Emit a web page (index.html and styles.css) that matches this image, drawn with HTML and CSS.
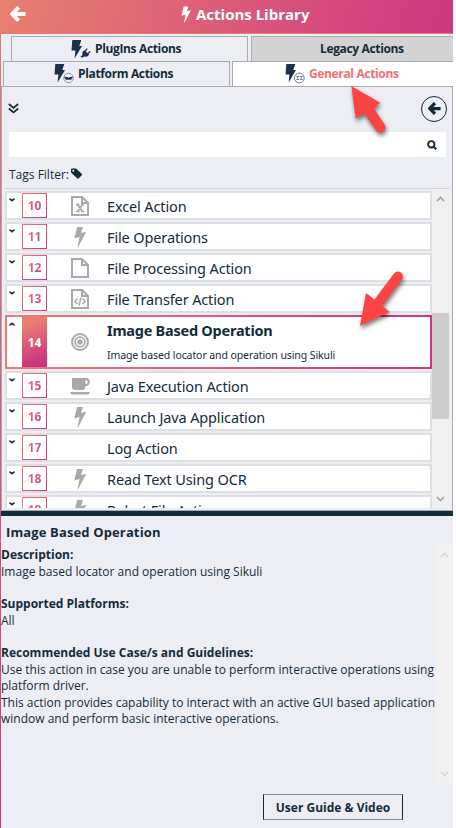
FILE: index.html
```html
<!DOCTYPE html>
<html lang="en">
<head>
<meta charset="utf-8">
<title>Actions Library</title>
<link rel="stylesheet" href="styles.css">
</head>
<body>
<svg class="defs" width="0" height="0" aria-hidden="true">
  <symbol id="bolt" viewBox="0 0 12 19"><path d="M3.200 0h5.600L7 5.600l5-1.100L4.300 19H3.600L5.600 9.600.6 10.900z"/></symbol>
  <symbol id="tabbolt" viewBox="0 0 12 19"><path d="M1.300 0h9L8.300 6h2.700L3.600 18.600l.8-8.100H.5z"/></symbol>
  <symbol id="left" viewBox="0 0 16 16"><path d="M8.600 1.300 2.300 8l6.300 6.700M2.800 8H15.500" fill="none" stroke="currentColor" stroke-width="4"/></symbol>
  <symbol id="page" viewBox="0 0 18 20"><path d="M1 1h10l6 6v12H1zM11 1v6h6" fill="none" stroke="currentColor" stroke-width="2"/></symbol>
  <symbol id="caret" viewBox="0 0 6 4"><path d="M.4.7 3 2.700 5.600.7" fill="none" stroke="currentColor" stroke-width="1.500"/></symbol>
  <symbol id="chev" viewBox="0 0 9 6"><path d="M1 1l3.500 3.500L8 1" fill="none" stroke="currentColor" stroke-width="1.600"/></symbol>
</svg>
<div class="app">
  <header class="header">
    <svg class="back" width="16" height="16"><use href="#left"/></svg>
    <h1 class="title"><svg width="10" height="17"><use href="#bolt"/></svg><span>Actions Library</span></h1>
  </header>
  <div class="body">
    <nav class="tabs tabs-top">
      <div class="tab tab-plugins">
        <svg width="20" height="19" viewBox="0 0 20 19"><use href="#tabbolt" width="12" height="19"/><path d="M9.500 16.800l2-1.800c-.7-2.500.3-4 2-4.800l4.600 4.400c-1 2-3 2.700-5 1.900l-2 1.300z"/><path d="M14.300 11l1.900-2.300M17 13.500l2.300-2" stroke="currentColor" stroke-width="1.300"/></svg>
        <span>PlugIns Actions</span></div>
      <div class="tab tab-legacy"><span>Legacy Actions</span></div>
    </nav>
    <nav class="tabs tabs-bottom">
      <div class="tab tab-platform">
        <svg width="20" height="20" viewBox="0 0 20 20"><use href="#tabbolt" width="12" height="19"/><circle cx="14.500" cy="14" r="4.700" fill="#edeef4" stroke="#8e97a6"/><path d="M10 12.800h9l-2 3h-5z"/><path d="M11 12l3.500-1.500L18 12l-3.500 1.800z" fill="#fff"/></svg>
        <span>Platform Actions</span></div>
      <div class="tab tab-general">
        <svg width="20" height="20" viewBox="0 0 20 20"><use href="#tabbolt" width="12" height="19"/><circle cx="14.300" cy="14" r="4.900" fill="#fff" stroke="#737e91"/><path d="M11.300 12.500h2.700m.8 0h2.700M11.300 15.500h2.700m.8 0h2.700M12.700 12.500v3m3.500-3v3" stroke="#7a8495" stroke-width="1"/></svg>
        <span>General Actions</span></div>
    </nav>
    <section class="panel">
      <div class="tools">
        <svg width="11" height="11" viewBox="0 0 11 11"><path d="M.8 1l4.700 4 4.700-4M.8 5.500l4.700 4 4.700-4" fill="none" stroke="currentColor" stroke-width="1.700"/></svg>
        <span class="round"><svg width="13" height="13"><use href="#left"/></svg></span>
      </div>
      <div class="search"><svg width="10" height="10" viewBox="0 0 10 10"><circle cx="4.300" cy="4.300" r="3.200" fill="none" stroke="currentColor" stroke-width="1.900"/><path d="M6.500 6.500 9.300 9.300" stroke="currentColor" stroke-width="2"/></svg></div>
      <div class="tags"><span>Tags Filter:</span><svg width="11" height="11" viewBox="0 0 11 11"><path fill-rule="evenodd" d="M0 1.500Q0 .5 1 .5h4L11 6q.4.600 0 1L7.600 10.500q-.6.400-1.100 0L.4 5Q0 4.600 0 4zM1.300 2.700a1 1 0 1 0 2 0 1 1 0 1 0-2 0"/></svg></div>
      <div class="scroller">
        <div class="list">
          <div class="row"><svg class="caret"><use href="#caret"/></svg><b class="num"><span>10</span></b><svg class="icon" viewBox="0 0 18 20"><use href="#page"/><path d="M5 8.700h3.500m1.300 0h3.400M5 15.500h3.500m1.300 0h3.400M6.700 8.700l4.800 6.800m0-6.800-4.800 6.800" stroke="currentColor" stroke-width="1.700"/></svg><span class="name">Excel Action</span></div>
          <div class="row"><svg class="caret"><use href="#caret"/></svg><b class="num"><span>11</span></b><svg class="icon"><use href="#bolt"/></svg><span class="name">File Operations</span></div>
          <div class="row"><svg class="caret"><use href="#caret"/></svg><b class="num"><span>12</span></b><svg class="icon"><use href="#page"/></svg><span class="name">File Processing Action</span></div>
          <div class="row"><svg class="caret"><use href="#caret"/></svg><b class="num"><span>13</span></b><svg class="icon" viewBox="0 0 18 20"><use href="#page"/><path d="M6.500 9.500 4 12.300l2.500 2.700m5-5.500 2.500 2.800-2.500 2.700M10 8.500l-2 8" fill="none" stroke="currentColor" stroke-width="1.600"/></svg><span class="name">File Transfer Action</span></div>
          <div class="row open"><svg class="caret"><use href="#caret"/></svg><b class="num"><span>14</span></b><svg class="icon" viewBox="0 0 18 18"><g fill="none" stroke="currentColor"><circle cx="9" cy="9" r="8" stroke-width="2"/><circle cx="9" cy="9" r="4.900" stroke-width="1.700"/></g><circle cx="9" cy="9" r="2.700"/></svg><div class="name"><strong>Image Based Operation</strong><small>Image based locator and operation using Sikuli</small></div></div>
          <div class="row"><svg class="caret"><use href="#caret"/></svg><b class="num"><span>15</span></b><svg class="icon cup" viewBox="0 0 20 17"><path fill-rule="evenodd" d="M2 0h14q3.800.3 3.800 4T15.500 8Q15.500 12 12.500 12H5.500Q2 12 2 9zM15.500 2.200v3.700q2.200 0 2.200-1.900T15.500 2.200M0 14h20q-.5 2.500-3 2.500H3Q.5 16.500 0 14"/></svg><span class="name">Java Execution Action</span></div>
          <div class="row"><svg class="caret"><use href="#caret"/></svg><b class="num"><span>16</span></b><svg class="icon"><use href="#bolt"/></svg><span class="name">Launch Java Application</span></div>
          <div class="row"><svg class="caret"><use href="#caret"/></svg><b class="num"><span>17</span></b><i class="icon"></i><span class="name">Log Action</span></div>
          <div class="row"><svg class="caret"><use href="#caret"/></svg><b class="num"><span>18</span></b><svg class="icon"><use href="#bolt"/></svg><span class="name">Read Text Using OCR</span></div>
          <div class="row"><svg class="caret"><use href="#caret"/></svg><b class="num"><span>19</span></b><svg class="icon"><use href="#bolt"/></svg><span class="name">Robot File Action</span></div>
        </div>
        <div class="bar"><svg class="up" width="9" height="6"><use href="#chev"/></svg><div class="thumb"></div><svg width="9" height="6"><use href="#chev"/></svg></div>
      </div>
    </section>
    <section class="details">
      <h2>Image Based Operation</h2>
      <div class="info">
        <div class="text">
          <h3>Description:</h3><p>Image based locator and operation using Sikuli</p>
          <h3>Supported Platforms:</h3><p>All</p>
          <h3>Recommended Use Case/s and Guidelines:</h3><p>Use this action in case you are unable to perform interactive operations using<br>platform driver.<br>This action provides capability to interact with an active GUI based application<br>window and perform basic interactive operations.</p>
        </div>
        <div class="bar faint"><svg class="up" width="9" height="6"><use href="#chev"/></svg><svg width="9" height="6"><use href="#chev"/></svg></div>
      </div>
      <button class="guide"><span>User Guide &amp; Video</span></button>
    </section>
  </div>
  <svg class="arrows" width="453" height="400" viewBox="0 0 453 400">
    <path d="M351.300 86l29 16.700-6.600 5.600 10.900 16.200a5 5 0 0 1-8.400 5.900L364.300 113.500l-8.600 5.200z"/>
    <path d="M360 326l6-33 8.500 6.500 19.500-26a5 5 0 0 1 8 6L382.500 306l7 6z"/>
  </svg>
</div>
</body>
</html>
```
FILE: styles.css
```css
* { box-sizing: border-box; }
body { margin: 0; background: #fff; color: #142b3a; font-family: "Open Sans", sans-serif; }
svg { display: block; flex: none; fill: currentColor; }
.defs { position: absolute; }
h1, h2, h3, p { margin: 0; }
.app { position: relative; width: 453px; height: 828px; overflow: hidden; background: #edeef4; }
.header { height: 33px; display: flex; align-items: center; padding: 0 0 5px 10px; color: #fff; background: linear-gradient(105deg, #e87f70, #cd3681); }
.title { flex: 1; display: flex; align-items: center; gap: 5px; padding-left: 155px; font: bold 15px "Open Sans", sans-serif; white-space: nowrap; }
.body { height: 795px; border-top: 1px solid #e87f70; border-left: 1px solid; border-image: linear-gradient(#e87b70, #cd3681) 1 0 0 1; display: flex; flex-direction: column; }
.tabs { display: flex; flex: none; height: 25px; }
.tabs-top { margin-top: 2px; padding-left: 10px; gap: 3px; }
.tabs-bottom { padding-left: 2px; gap: 2px; }
.tab { display: flex; align-items: center; gap: 4px; border: 1px solid #a9abb2; border-bottom: 0; font: bold 12px "Open Sans", sans-serif; letter-spacing: -.35px; white-space: nowrap; }
.tab svg { color: #1d3049; }
.tab span { line-height: 16px; margin-top: -1px; }
.tab-plugins { width: 237px; padding-left: 59px; }
.tab-legacy { width: 202px; padding-left: 68px; background: #d3d3d3; border-right: 0; }
.tab-platform { width: 227px; padding-left: 50px; }
.tab-general { width: 221px; padding-left: 52px; background: #fff; color: #f47070; border-right: 0; }
.panel { flex: none; height: 425px; border: 1px solid #a9abb2; }
.tools { height: 43px; display: flex; align-items: center; justify-content: space-between; padding: 0 5px 0 6px; }
.round { width: 26px; height: 26px; border: 1px solid #142b3a; border-radius: 50%; display: flex; align-items: center; justify-content: center; }
.search { height: 25px; margin: 2px 6px 0 7px; background: #fff; display: flex; align-items: center; justify-content: flex-end; padding-right: 9px; }
.tags { display: flex; gap: 2px; padding: 8px 0 0 7px; height: 31px; font-size: 12px; line-height: 20px; }
.tags svg { margin-top: 3px; }
.scroller { height: 320px; margin: 0 2px; border-top: 1px solid #d3d4dc; display: flex; }
.list { width: 428px; padding: 2px 0 0 1px; display: flex; flex-direction: column; gap: 2px; overflow: hidden; }
.row { flex: none; height: 29px; display: flex; align-items: center; border: 2px solid #dddfe5; background: #fff; }
.caret { width: 6px; height: 4px; margin-left: 2px; align-self: flex-start; margin-top: 5px; }
.num { width: 25px; height: 25px; margin-left: 7px; border: 1px solid; border-image: linear-gradient(135deg, #e87f70, #cd3681) 1; display: flex; align-items: center; justify-content: center; font: bold 12px "Open Sans", sans-serif; }
.num span { background: linear-gradient(135deg, #e87f70, #cd3681); -webkit-background-clip: text; background-clip: text; color: transparent; }
.icon { width: 18px; height: 20px; margin-left: 24px; margin-top: 1px; color: #a9a9a9; }
.cup { width: 20px; height: 17px; margin: 1px -1px 0 23px; }
.name { margin-left: 18px; font-family: "Noto Sans", sans-serif; font-size: 14.500px; letter-spacing: -.13px; white-space: nowrap; line-height: 20px; }
.open { height: 54px; border-image: linear-gradient(90deg, #e87f70, #cd3681) 1; }
.open .caret { transform: rotate(180deg); }
.open .num { height: 50px; border: 0; background: linear-gradient(160deg, #e87f70 15%, #cd3681 85%); }
.open .num span { background: none; color: #fff; }
.open .icon { margin-top: 0; }
.open .name { align-self: stretch; margin-top: 3px; }
.open strong, .open small { display: block; }
.open strong { letter-spacing: -.24px; }
.open small { font-size: 10.500px; letter-spacing: -.09px; line-height: 15px; margin-top: 8px; }
.bar { width: 17px; background: #f0f0f0; color: #a0a0a0; display: flex; flex-direction: column; align-items: center; padding: 7px 0 6px; }
.up { transform: rotate(180deg); }
.thumb { width: 17px; height: 107px; margin: 111px 0 77px; background: #cdcdcd; }
.details { flex: 1; border-top: 5px solid #142b3a; display: flex; flex-direction: column; }
h2 { font-size: 13px; letter-spacing: .13px; line-height: 20px; padding: 6px 0 0 5px; }
.info { display: flex; margin-top: 3px; height: 238px; justify-content: space-between; }
.text { font-size: 12px; line-height: 16.400px; padding-top: 1px; white-space: nowrap; }
h3 { font-size: 12px; line-height: 17px; }
p { padding-top: 1px; margin-bottom: 14.500px; }
.faint { justify-content: space-between; color: #d8d8d8; }
.guide { margin: 11px 0 0 262px; width: 140px; height: 26px; padding: 0; border: 1px solid #142b3a; border-top-color: #7d8995; border-bottom-color: #7d8995; background: none; color: inherit; font: bold 12px "Open Sans", sans-serif; white-space: nowrap; }
.arrows { position: absolute; left: 0; top: 0; fill: #fd4444; filter: drop-shadow(1px 3px 2px rgba(0, 0, 0, .5)); pointer-events: none; }
```
